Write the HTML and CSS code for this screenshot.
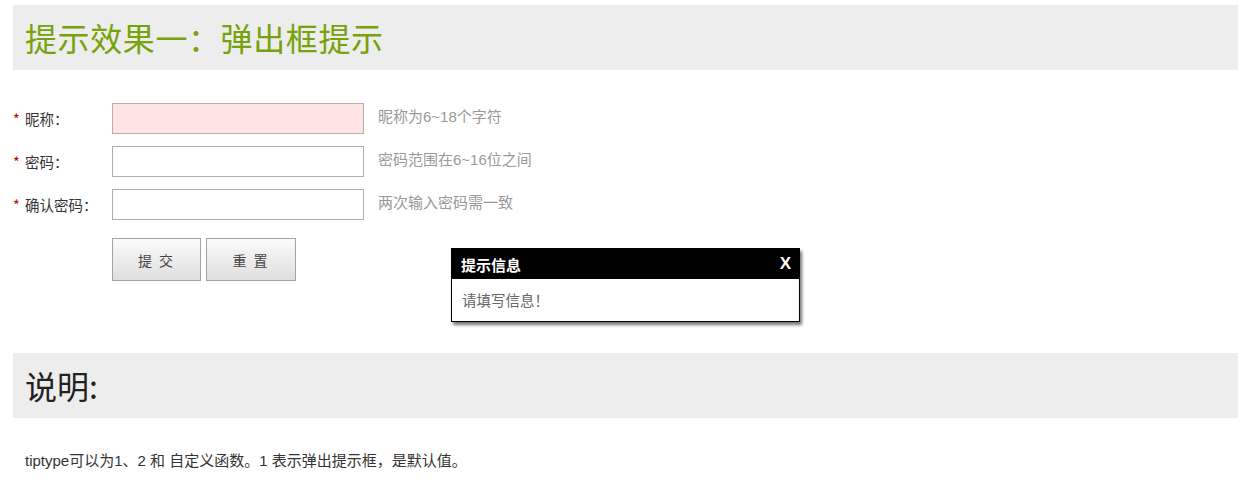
FILE: index.html
```html
<!DOCTYPE html>
<html lang="zh-CN">
<head>
<meta charset="utf-8">
<title>提示效果一：弹出框提示</title>
<link rel="stylesheet" href="styles.css">
</head>
<body>
<div class="page">
  <h2 class="bar bar-green">提示效果一：弹出框提示</h2>
  <form class="form">
    <div class="row">
      <label class="label"><span class="req">*</span> 昵称：</label>
      <input class="field field-error" type="text">
      <span class="tip">昵称为6~18个字符</span>
    </div>
    <div class="row">
      <label class="label"><span class="req">*</span> 密码：</label>
      <input class="field" type="password">
      <span class="tip">密码范围在6~16位之间</span>
    </div>
    <div class="row">
      <label class="label"><span class="req">*</span> 确认密码：</label>
      <input class="field" type="password">
      <span class="tip">两次输入密码需一致</span>
    </div>
    <div class="actions">
      <button class="btn" type="button">提 交</button>
      <button class="btn btn-wide" type="button">重 置</button>
    </div>
  </form>
  <h2 class="bar bar-dark">说明:</h2>
  <p class="desc">tiptype可以为1、2 和 自定义函数。1 表示弹出提示框，是默认值。</p>
</div>
<div class="popup">
  <div class="popup-head"><span>提示信息</span><span class="close">X</span></div>
  <div class="popup-body">请填写信息！</div>
</div>
</body>
</html>
```
FILE: styles.css
```css
html, body {
  margin: 0;
  padding: 0;
  background: #fff;
}
body {
  font-family: "Liberation Sans", "Noto Sans CJK SC", sans-serif;
  font-size: 14px;
  color: #333;
}
.page {
  padding: 5px 13px 0 13px;
}
.bar {
  margin: 0;
  height: 65px;
  line-height: 65px;
  padding: 0 12px;
  background: #ededed;
  font-size: 32px;
  font-weight: normal;
  font-family: "Noto Sans CJK SC", sans-serif;
}
.bar-green {
  color: #76a20a;
  letter-spacing: 0.6px;
}
.bar-dark {
  color: #222;
  margin-top: 72px;
}
.form {
  margin-top: 33px;
}
.row {
  display: flex;
  align-items: center;
  height: 31px;
  margin-bottom: 12px;
}
.label {
  width: 99px;
  flex: none;
  font-family: "Noto Sans CJK SC", sans-serif;
  font-size: 14.5px;
  color: #333;
}
.req {
  color: #c00;
  margin-right: 2px;
}
.field {
  box-sizing: border-box;
  width: 252px;
  height: 31px;
  margin: 0;
  border: 1px solid #a8b0ba;
  background: #fff;
  padding: 0 4px;
}
.field-error {
  background: #ffe4e4;
  border-color: #b8aeb0;
}
.tip {
  margin-left: 14px;
  margin-top: -6px;
  color: #999;
  font-size: 15px;
  font-family: "Liberation Sans", "Noto Sans CJK SC", sans-serif;
}
.actions {
  display: flex;
  gap: 5px;
  padding-left: 99px;
  margin-top: 18px;
}
.btn {
  box-sizing: border-box;
  width: 89px;
  height: 43px;
  border: 1px solid #a3a3a3;
  background: linear-gradient(#fbfbfb, #dedede);
  color: #444;
  font-family: "Noto Sans CJK SC", sans-serif;
  font-size: 14px;
  letter-spacing: 2px;
  cursor: pointer;
}
.btn-wide {
  width: 90px;
}
.desc {
  margin: 31px 0 0 12px;
  line-height: 24px;
  font-size: 15px;
  color: #333;
}
.popup {
  position: absolute;
  left: 451px;
  top: 248px;
  width: 347px;
  border: 1px solid #000;
  background: #fff;
  box-shadow: 2px 3px 3px #777;
  font-family: "Noto Sans CJK SC", sans-serif;
}
.popup-head {
  display: flex;
  justify-content: space-between;
  align-items: center;
  height: 30px;
  padding: 0 8px 0 9px;
  background: #000;
  color: #fff;
  font-weight: bold;
  font-size: 15px;
}
.close {
  font-family: "Liberation Sans", sans-serif;
  font-size: 17px;
}
.popup-body {
  height: 42px;
  line-height: 42px;
  padding-left: 10px;
  font-size: 14.5px;
  color: #666;
}
```
